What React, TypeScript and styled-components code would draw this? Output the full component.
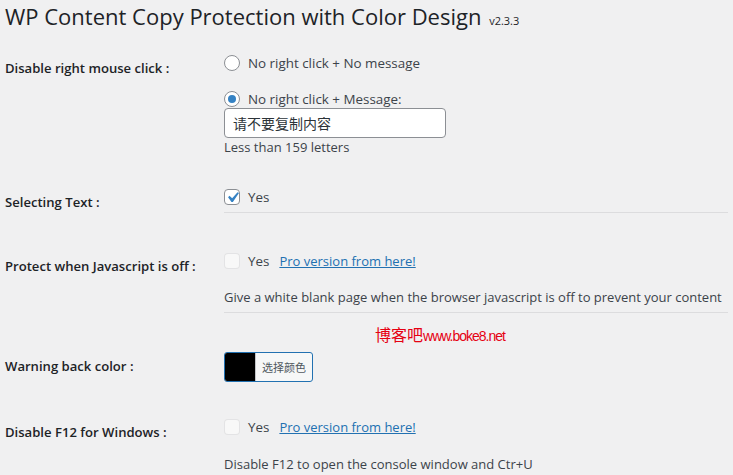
import React from 'react';
import styled, { createGlobalStyle } from 'styled-components';

const GlobalStyle = createGlobalStyle`
  html, body {
    margin: 0;
    padding: 0;
    background: #f0f0f1;
  }
  body {
    font-family: "Open Sans", "Noto Sans", "Noto Sans CJK SC", sans-serif;
    color: #3c434a;
    font-size: 13px;
  }
`;

const Page = styled.div`
  position: relative;
  padding: 0 5px 0 5px;
  height: 475px;
  overflow: hidden;
`;

const Title = styled.h1`
  margin: 0;
  padding-top: 1px;
  font-size: 22px;
  font-weight: 400;
  line-height: 30px;
  color: #1d2327;
  white-space: nowrap;
`;

const Version = styled.small`
  font-size: 11px;
  margin-left: 2px;
`;

const Form = styled.div`
  display: flex;
  flex-direction: column;
`;

const Row = styled.div<{ $mt: number }>`
  display: grid;
  grid-template-columns: 219px 1fr;
  margin-top: ${(p) => p.$mt}px;
`;

const Label = styled.div`
  padding-top: 5px;
  font-size: 13.1px;
  font-weight: 600;
  line-height: 18px;
  color: #1d2327;
  white-space: nowrap;
`;

const Cell = styled.div`
  display: flex;
  flex-direction: column;
  align-items: flex-start;
  min-width: 0;
`;

const Option = styled.label<{ $mt?: number }>`
  display: flex;
  align-items: center;
  height: 18px;
  line-height: 18px;
  font-size: 13.4px;
  margin-top: ${(p) => p.$mt ?? 0}px;
  white-space: nowrap;
`;

const Radio = styled.span<{ $on?: boolean }>`
  box-sizing: border-box;
  width: 16px;
  height: 16px;
  border-radius: 50%;
  border: 1px solid #8c8f94;
  background: #fff;
  margin-right: 8px;
  display: flex;
  align-items: center;
  justify-content: center;
  &::after {
    content: '';
    display: ${(p) => (p.$on ? 'block' : 'none')};
    width: 8px;
    height: 8px;
    border-radius: 50%;
    background: #3582c4;
  }
`;

const Check = styled.span<{ $disabled?: boolean }>`
  box-sizing: border-box;
  width: 16px;
  height: 16px;
  border-radius: 4px;
  border: 1px solid ${(p) => (p.$disabled ? 'rgba(220,220,222,0.75)' : '#8c8f94')};
  background: ${(p) => (p.$disabled ? 'rgba(255,255,255,0.5)' : '#fff')};
  margin-right: 8px;
  display: flex;
  align-items: center;
  justify-content: center;
  overflow: visible;
  svg {
    flex: none;
    margin: -3px;
  }
`;

const Link = styled.a`
  color: #2271b1;
  text-decoration: underline;
  font-size: 13px;
  margin-left: 10px;
`;

const TextInput = styled.div`
  box-sizing: border-box;
  width: 222px;
  height: 30px;
  padding: 0 8px;
  background: #fff;
  border: 1px solid #8c8f94;
  border-radius: 4px;
  font-size: 14px;
  line-height: 28px;
  color: #2c3338;
  font-family: "Noto Sans CJK SC", sans-serif;
`;

const Hint = styled.div<{ $mt?: number }>`
  line-height: 18px;
  margin-top: ${(p) => p.$mt ?? 0}px;
  white-space: nowrap;
`;

const Rule = styled.hr`
  align-self: stretch;
  border: 0;
  border-top: 1px solid #dcdcde;
  margin: 6px 0 0;
`;

const ColorButton = styled.div`
  box-sizing: border-box;
  display: flex;
  height: 30px;
  border: 1px solid #2271b1;
  border-radius: 3px;
  overflow: hidden;
  background: #f6f7f7;
`;

const Swatch = styled.span<{ $color: string }>`
  width: 30px;
  background: ${(p) => p.$color};
  border-right: 1px solid #c3c4c7;
`;

const ColorText = styled.span`
  padding: 0 6px;
  font-size: 11px;
  line-height: 28px;
  color: #50575e;
  font-family: "Noto Sans CJK SC", sans-serif;
`;

const Watermark = styled.div`
  position: absolute;
  left: 375px;
  top: 325px;
  color: #e60012;
  font-size: 16px;
  line-height: 18px;
  font-family: "Noto Sans CJK SC", sans-serif;
  white-space: nowrap;
`;

const WatermarkUrl = styled.span`
  font-family: "Liberation Sans", sans-serif;
  font-size: 14px;
  letter-spacing: -1px;
`;

const Tick = () => (
  <svg width="21" height="21" viewBox="0 0 20 20">
    <path d="M14.83 4.89l1.34.94-5.81 8.38H9.02L5.78 9.67l1.34-1.25 2.57 2.4z" fill="#3582c4" />
  </svg>
);

export default function App() {
  return (
    <>
      <GlobalStyle />
      <Page>
        <Title>
          WP Content Copy Protection with Color Design <Version>v2.3.3</Version>
        </Title>
        <Form>
          <Row $mt={18}>
            <Label>Disable right mouse click :</Label>
            <Cell>
              <Option>
                <Radio />
                No right click + No message
              </Option>
              <Option $mt={18}>
                <Radio $on />
                No right click + Message:
              </Option>
              <TextInput>请不要复制内容</TextInput>
              <Hint>Less than 159 letters</Hint>
            </Cell>
          </Row>
          <Row $mt={32}>
            <Label>Selecting Text :</Label>
            <Cell>
              <Option>
                <Check>
                  <Tick />
                </Check>
                Yes
              </Option>
              <Rule />
            </Cell>
          </Row>
          <Row $mt={39}>
            <Label>Protect when Javascript is off :</Label>
            <Cell>
              <Option>
                <Check $disabled />
                Yes
                <Link href="#">Pro version from here!</Link>
              </Option>
              <Hint $mt={18}>
                Give a white blank page when the browser javascript is off to prevent your content
              </Hint>
              <Rule />
            </Cell>
          </Row>
          <Row $mt={39}>
            <Label>Warning back color :</Label>
            <Cell>
              <ColorButton>
                <Swatch $color="#000" />
                <ColorText>选择颜色</ColorText>
              </ColorButton>
            </Cell>
          </Row>
          <Row $mt={36}>
            <Label>Disable F12 for Windows :</Label>
            <Cell>
              <Option>
                <Check $disabled />
                Yes
                <Link href="#">Pro version from here!</Link>
              </Option>
              <Hint $mt={19}>Disable F12 to open the console window and Ctr+U</Hint>
            </Cell>
          </Row>
        </Form>
        <Watermark>
          博客吧<WatermarkUrl>www.boke8.net</WatermarkUrl>
        </Watermark>
      </Page>
    </>
  );
}
